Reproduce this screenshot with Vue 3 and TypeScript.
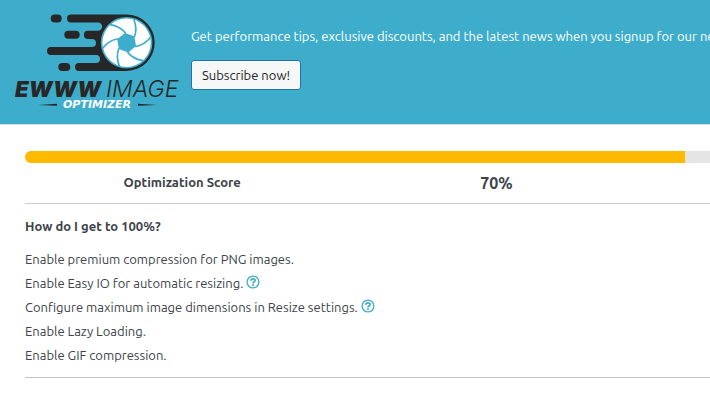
<script setup lang="ts">
interface Tip {
  text: string
  help: boolean
}

const score = 70
const tips: Tip[] = [
  { text: 'Enable premium compression for PNG images.', help: false },
  { text: 'Enable Easy IO for automatic resizing.', help: true },
  { text: 'Configure maximum image dimensions in Resize settings.', help: true },
  { text: 'Enable Lazy Loading.', help: false },
  { text: 'Enable GIF compression.', help: false },
]
const blades = [0, 60, 120, 180, 240, 300]
</script>

<template>
  <div class="page">
    <header class="banner">
      <svg class="logo" viewBox="0 0 165 100" role="img" aria-label="EWWW Image Optimizer">
        <!-- speed trails -->
        <g fill="#272727">
          <path d="M56 4.400H111.400a28.300 28.300 0 0 1 0 56.600H64a4 4 0 0 1 0-8H81a4 4 0 0 0 0-8H36a4 4 0 0 1 0-8H77a4 4 0 0 0 0-8H73a4 4 0 0 1 0-8.200H83a4.200 4.200 0 0 0 0-8.400H56a4 4 0 0 1 0-8z" />
          <rect x="35.700" y="4.400" width="11" height="8" rx="4" />
          <rect x="49.300" y="20.800" width="15.400" height="8" rx="4" />
          <rect x="43.300" y="53" width="12" height="8" rx="4" />
        </g>
        <!-- camera shutter -->
        <g transform="translate(111.600 32.700)">
          <circle r="25.800" fill="#3eadcb" />
          <circle r="24.200" fill="#fff" />
          <polygon points="7.700,-6.400 9.400,3.400 1.700,9.800 -7.700,6.400 -9.400,-3.400 -1.700,-9.800" fill="#3eadcb" />
          <path
            v-for="angle in blades"
            :key="angle"
            d="M7.200-23.500Q11-14 7.700-5.500"
            fill="none"
            stroke="#3eadcb"
            stroke-width="1.700"
            :transform="`rotate(${angle})`"
          />
        </g>
        <!-- wordmark -->
        <text class="word-heavy" x="0" y="87">EWWW</text>
        <text class="word-light" x="91" y="87">IMAGE</text>
        <path d="M23 95L42 93.700V95.700zM142 95L123 93.700V95.700z" fill="#272727" />
        <text class="word-small" x="82" y="98">OPTIMIZER</text>
      </svg>
      <div class="signup">
        <p class="pitch">Get performance tips, exclusive discounts, and the latest news when you signup for our newsletter!</p>
        <button class="subscribe" type="button">Subscribe now!</button>
      </div>
    </header>

    <main class="content">
      <section class="score">
        <div class="track" role="progressbar" aria-labelledby="score-label" :aria-valuenow="score" aria-valuemin="0" aria-valuemax="100">
          <div class="fill" :style="{ width: score + '%' }"></div>
        </div>
        <div class="figures">
          <strong id="score-label" class="caption">Optimization Score</strong>
          <strong class="percent">{{ score }}%</strong>
        </div>
      </section>
      <section class="tips">
        <h2>How do I get to 100%?</h2>
        <ul>
          <li v-for="tip in tips" :key="tip.text">
            {{ tip.text }}
            <a v-if="tip.help" class="help" href="#" aria-label="Help">
              <svg viewBox="0 0 14 14" aria-hidden="true">
                <circle cx="7" cy="7" r="5.900" stroke-width="1.300" />
                <path d="M4.900 5.700C4.900 3.200 9.100 3.200 9.100 5.500C9.100 6.900 7 6.700 7 8.400M7 9.300V11" stroke-width="1.700" />
              </svg>
            </a>
          </li>
        </ul>
      </section>
    </main>
  </div>
</template>

<style>
body {
  margin: 0;
  background: #fff;
  overflow: hidden;
}
</style>

<style scoped>
.page {
  min-width: 993px;
  color: #3c434a;
  font: 13px/24px Ubuntu, "Noto Sans", sans-serif;
}

.banner {
  display: flex;
  gap: 11px;
  padding: 10px 15px 14px;
  background: #3eadcb;
  border-bottom: 1px solid #dcdcde;
}

.logo {
  flex: none;
  width: 165px;
  height: 100px;
  overflow: visible;
}

.word-heavy,
.word-light {
  font-family: Inter, sans-serif;
  font-style: italic;
  fill: #272727;
}

.word-heavy {
  font-size: 22px;
  font-weight: 900;
}

.word-light {
  font-size: 23px;
  font-weight: 300;
}

.word-small {
  font-family: "DejaVu Sans", sans-serif;
  font-size: 11px;
  font-style: italic;
  font-weight: 700;
  text-anchor: middle;
  fill: #fff;
}

.signup {
  padding-top: 14px;
}

.pitch {
  margin: 0 0 12px;
  color: #fff;
  white-space: nowrap;
}

.subscribe {
  display: block;
  padding: 0 10px;
  border: 1px solid #2271b1;
  border-radius: 3px;
  background: #f6f7f7;
  color: #1d2327;
  font: inherit;
  line-height: 28px;
}

.content {
  padding: 26px 25px;
}

.track {
  height: 12px;
  overflow: hidden;
  border-radius: 6px;
  background: #e5e5e5;
}

.fill {
  height: 100%;
  background: #ffba00;
}

.figures {
  display: grid;
  grid-template-columns: repeat(3, 1fr);
  padding: 8px 0;
  border-bottom: 1px solid #ccc;
  text-align: center;
}

.caption {
  line-height: 22px;
}

.percent {
  font-size: 16px;
}

.tips {
  padding: 10px 0;
  border-bottom: 1px solid #c3c4c7;
}

h2 {
  margin: 0 0 9px;
  font-size: 13px;
  line-height: 24px;
}

ul {
  margin: 0;
  padding: 0;
  list-style: none;
}

.help {
  display: inline-block;
  height: 14px;
  line-height: 14px;
  vertical-align: -1px;
}

.help svg {
  display: block;
  width: 14px;
  height: 14px;
  fill: none;
  stroke: #3eadcb;
}
</style>
